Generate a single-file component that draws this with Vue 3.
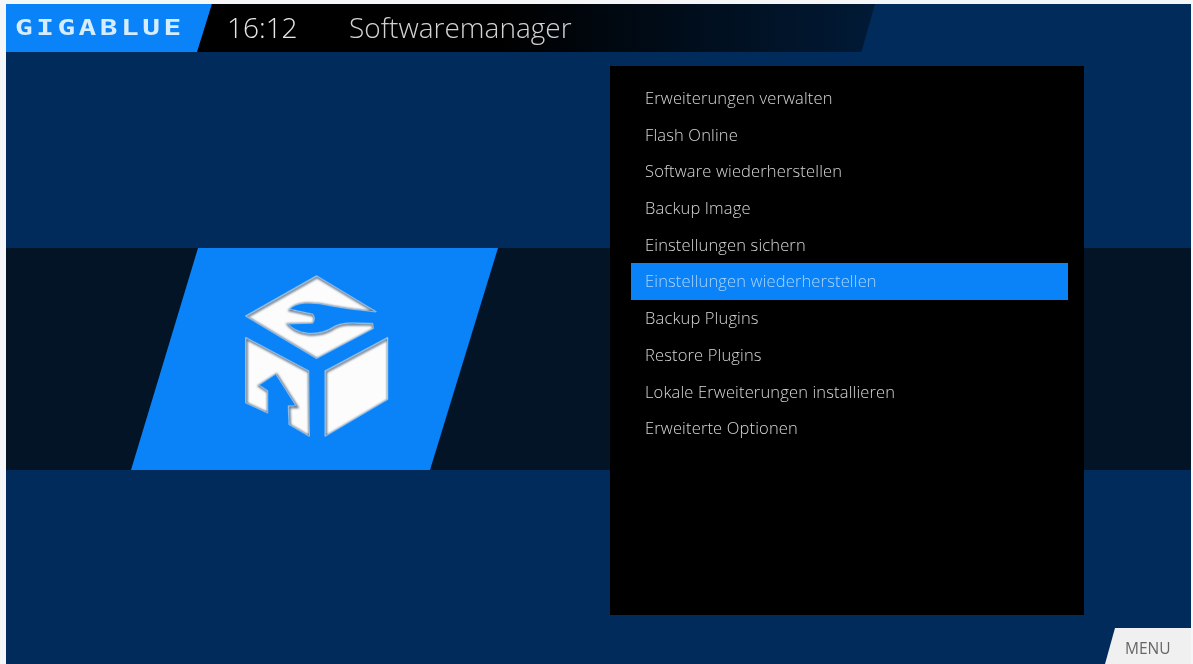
<script setup>
const items = [
  'Erweiterungen verwalten',
  'Flash Online',
  'Software wiederherstellen',
  'Backup Image',
  'Einstellungen sichern',
  'Einstellungen wiederherstellen',
  'Backup Plugins',
  'Restore Plugins',
  'Lokale Erweiterungen installieren',
  'Erweiterte Optionen'
]
const selected = 5

// the three faces of the cube, in the icon's own coordinates
const faces = [
  'M592 125 770 232Q690 224 640 215 600 205 560 205 525 207 510 225L580 240Q590 252 580 266L505 268Q525 292 565 297 610 300 640 280 660 266 700 266L760 268 762 282 592 372 380 245Z',
  'M380 310 568 410 570 605 510 570 508 515 532 515 470 418 418 452 445 470 445 535 380 505Z',
  'M805 310 618 410 618 605 805 495Z'
]
</script>

<template>
  <div class="screen">
    <header class="topbar">
      <div class="logo"><span class="logo-text">GIGABLUE</span></div>
      <div class="title-bar">
        <span class="clock">16:12</span>
        <span class="title">Softwaremanager</span>
      </div>
    </header>

    <main class="stage">
      <div class="band">
        <div class="tile">
          <svg class="box-icon" viewBox="360 110 470 510" width="157" height="170">
            <defs>
              <filter id="soft" x="-10%" y="-10%" width="120%" height="120%">
                <feGaussianBlur stdDeviation="3" />
              </filter>
              <clipPath v-for="(d, i) in faces" :id="'face-' + i" :key="d"><path :d="d" /></clipPath>
            </defs>
            <g v-for="(d, i) in faces" :key="d">
              <path class="face-edge" :d="d" />
              <path class="face-fill" :d="d" />
              <g :clip-path="'url(#face-' + i + ')'">
                <path class="face-shade" :d="d" filter="url(#soft)" transform="translate(2 3)" />
              </g>
            </g>
          </svg>
        </div>
      </div>

      <section class="panel">
        <ul class="menu">
          <li
            v-for="(item, i) in items"
            :key="item"
            class="menu-row"
            :class="{ 'menu-row--active': i === selected }"
          >{{ item }}</li>
        </ul>
      </section>
    </main>

    <div class="menu-key">MENU</div>
  </div>
</template>

<style scoped>
.screen {
  position: relative;
  height: 660px;
  margin: 4px 2px 0 6px;
  background: #012b5b;
  font-family: "Open Sans", "Liberation Sans", sans-serif;
  overflow: hidden;
  filter: blur(0.5px);
}

.topbar {
  display: flex;
  height: 48px;
}

.logo {
  display: flex;
  align-items: center;
  width: 206px;
  padding-left: 9px;
  box-sizing: border-box;
  background: #0a82f8;
  clip-path: polygon(0 0, 100% 0, 93% 100%, 0 100%);
  flex-shrink: 0;
}

.logo-text {
  color: #d6ecff;
  font-family: "DejaVu Sans Mono", monospace;
  font-weight: 700;
  font-size: 21px;
  letter-spacing: 2.5px;
  line-height: 1;
  white-space: nowrap;
  transform: scaleX(1.4);
  transform-origin: left center;
}

.title-bar {
  display: flex;
  align-items: center;
  width: 678px;
  margin-left: -15px;
  padding: 0 0 2px 30px;
  box-sizing: border-box;
  background: linear-gradient(90deg, #000 0%, #000 45%, #011a36 100%);
  clip-path: polygon(15px 0, 100% 0, 98% 100%, 0 100%);
}

.clock {
  width: 122px;
  color: #e6e6e6;
  font-size: 28px;
  font-weight: 300;
}

.title {
  color: #d2d2d2;
  font-size: 28px;
  font-weight: 300;
}

.stage {
  display: grid;
  grid-template-columns: 1fr;
  padding-top: 14px;
}

.band,
.panel {
  grid-area: 1 / 1;
}

.band {
  height: 222px;
  margin-top: 182px;
  padding-left: 125px;
  background: #021425;
}

.tile {
  display: flex;
  align-items: center;
  justify-content: center;
  width: 367px;
  height: 222px;
  padding: 0 0 6px 6px;
  box-sizing: border-box;
  background: #0a82f8;
  clip-path: polygon(67px 0, 100% 0, 299px 100%, 0 100%);
}

.box-icon {
  display: block;
}

.face-edge {
  fill: none;
  stroke: #6cb4fa;
  stroke-width: 5;
  stroke-linejoin: round;
}

.face-fill {
  fill: #fcfcfc;
}

.face-shade {
  fill: none;
  stroke: #5b6f84;
  stroke-width: 7;
}

.panel {
  justify-self: start;
  width: 474px;
  height: 549px;
  margin-left: 604px;
  padding: 14px 16px 0 21px;
  box-sizing: border-box;
  background: #000;
}

.menu {
  list-style: none;
  margin: 0;
  padding: 0;
}

.menu-row {
  height: 36.7px;
  padding-left: 14px;
  color: #d8d8d8;
  font-size: 16.5px;
  font-weight: 300;
  letter-spacing: 0.15px;
  line-height: 36.7px;
  white-space: nowrap;
}

.menu-row--active {
  background: #0a82f8;
  color: #a9d6ff;
}

.menu-key {
  position: absolute;
  right: -2px;
  bottom: 0;
  width: 88px;
  height: 36px;
  padding: 11px 0 0 20px;
  box-sizing: border-box;
  background: #f0f0f0;
  clip-path: polygon(10px 0, 100% 0, 100% 100%, 0 100%);
  color: #666;
  font-size: 15.5px;
  line-height: 18px;
}
</style>

<style>
body {
  background: #f4f6f8;
  overflow: hidden;
}
</style>
